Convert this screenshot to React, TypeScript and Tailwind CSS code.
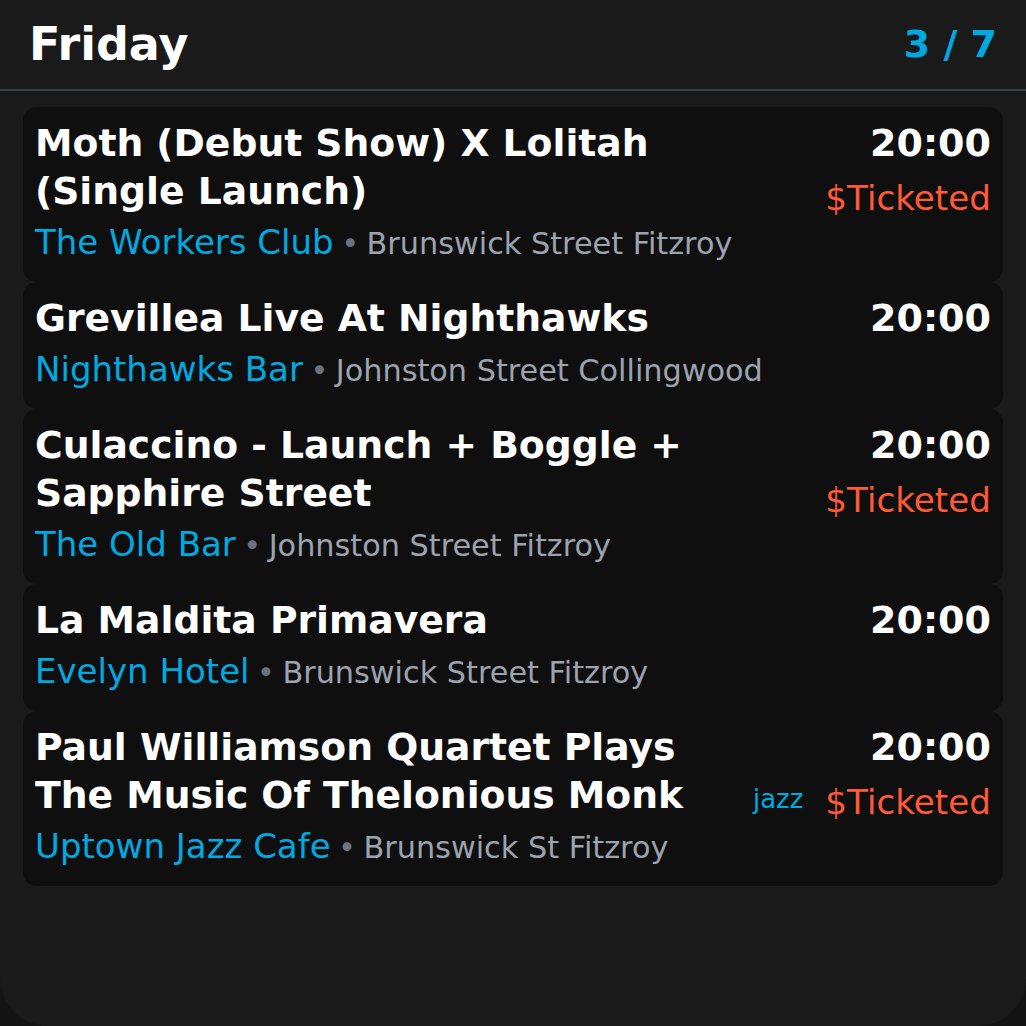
type Gig = {
  title: string;
  venue: string;
  address: string;
  time: string;
  tag?: string;
  ticketed?: boolean;
};

const gigs: Gig[] = [
  {
    title: "Moth (Debut Show) X Lolitah (Single Launch)",
    venue: "The Workers Club",
    address: "Brunswick Street Fitzroy",
    time: "20:00",
    ticketed: true,
  },
  {
    title: "Grevillea Live At Nighthawks",
    venue: "Nighthawks Bar",
    address: "Johnston Street Collingwood",
    time: "20:00",
  },
  {
    title: "Culaccino - Launch + Boggle + Sapphire Street",
    venue: "The Old Bar",
    address: "Johnston Street Fitzroy",
    time: "20:00",
    ticketed: true,
  },
  {
    title: "La Maldita Primavera",
    venue: "Evelyn Hotel",
    address: "Brunswick Street Fitzroy",
    time: "20:00",
  },
  {
    title: "Paul Williamson Quartet Plays The Music Of Thelonious Monk",
    venue: "Uptown Jazz Cafe",
    address: "Brunswick St Fitzroy",
    time: "20:00",
    tag: "jazz",
    ticketed: true,
  },
];

function GigCard({ gig }: { gig: Gig }) {
  return (
    <div className="flex justify-between gap-6 rounded-[14px] bg-[#0f0f0f] px-3 pt-3 pb-[14px]">
      <div className="flex min-w-0 flex-1 flex-col">
        <div className="text-[37.7px] font-bold leading-[48px] text-white">{gig.title}</div>
        <div className="mt-0.5 leading-[1.5]">
          <span className="text-[34px] text-[#00a9e0]">{gig.venue}</span>
          <span className="mx-[7.5px] text-[30.3px] text-[#6b7280]">•</span>
          <span className="text-[30.3px] text-[#9ca3af]">{gig.address}</span>
        </div>
      </div>

      <div className="flex shrink-0 flex-col items-end">
        <div className="text-[38px] font-bold leading-[48px] text-white">{gig.time}</div>
        {(gig.ticketed || gig.tag) && (
          <div className="mt-[6px] flex items-center gap-[22px]">
            {gig.tag && (
              <span className="mb-[6px] text-[26px] leading-[1.5] text-[#00a9e0]">{gig.tag}</span>
            )}
            {gig.ticketed && (
              <span className="text-[34.2px] leading-[1.5] text-[#ff5a36]">$Ticketed</span>
            )}
          </div>
        )}
      </div>
    </div>
  );
}

export default function App() {
  return (
    <div className="min-h-[1026px] bg-[#141414] font-['DejaVu_Sans',sans-serif]">
      <div className="min-h-[1026px] rounded-b-[48px] bg-[#1a1a1a]">
        {/* Day header */}
        <div className="flex h-[91px] items-center justify-between border-b-2 border-[#374151] px-[29px]">
          <h1 className="text-[46px] font-bold text-white">Friday</h1>
          <span className="text-[38px] font-bold text-[#00a9e0]">3 / 7</span>
        </div>

        {/* Gig list */}
        <div className="flex flex-col px-[23px] pt-4">
          {gigs.map((gig, i) => (
            <GigCard key={i} gig={gig} />
          ))}
        </div>
      </div>
    </div>
  );
}
